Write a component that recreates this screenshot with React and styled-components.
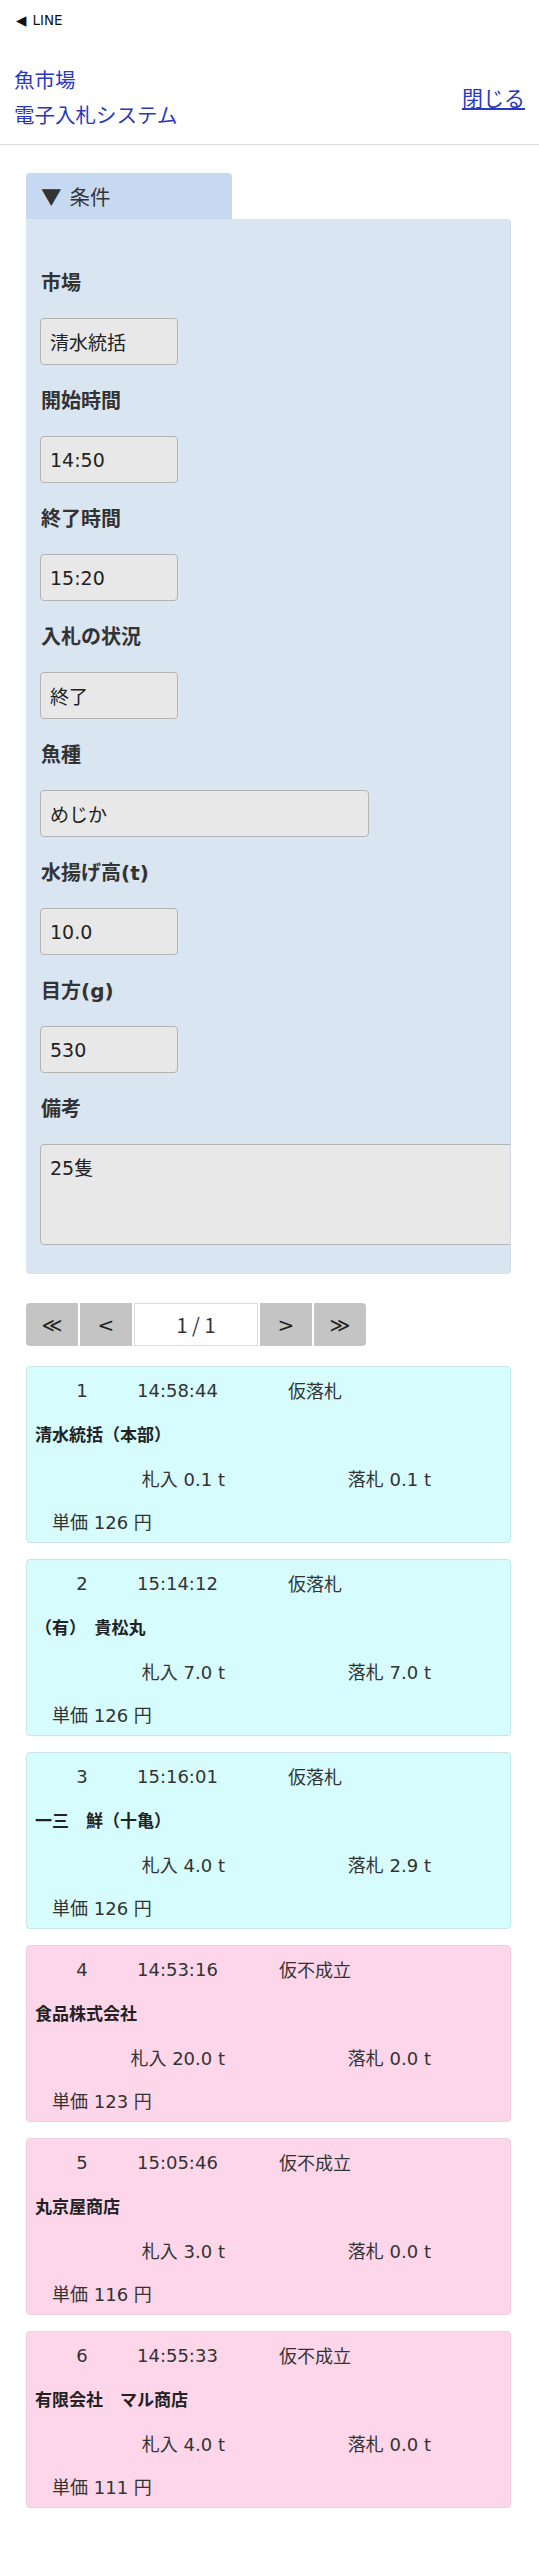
import styled, { createGlobalStyle } from "styled-components";

// 全体のベース
const GlobalStyle = createGlobalStyle`
  body {
    margin: 0;
    background: #ffffff;
    font-family: "DejaVu Sans", "Noto Sans CJK JP", sans-serif;
    color: #333333;
  }
`;

const conditions = [
  { label: "市場", value: "清水統括" },
  { label: "開始時間", value: "14:50" },
  { label: "終了時間", value: "15:20" },
  { label: "入札の状況", value: "終了" },
  { label: "魚種", value: "めじか", wide: true },
  { label: "水揚げ高(t)", value: "10.0" },
  { label: "目方(g)", value: "530" },
];

const bids = [
  { no: 1, time: "14:58:44", status: "仮落札", name: "清水統括（本部）", bid: "0.1", won: "0.1", price: 126, ok: true },
  { no: 2, time: "15:14:12", status: "仮落札", name: "（有）　貴松丸", bid: "7.0", won: "7.0", price: 126, ok: true },
  { no: 3, time: "15:16:01", status: "仮落札", name: "一三　鮮（十亀）", bid: "4.0", won: "2.9", price: 126, ok: true },
  { no: 4, time: "14:53:16", status: "仮不成立", name: "食品株式会社", bid: "20.0", won: "0.0", price: 123, ok: false },
  { no: 5, time: "15:05:46", status: "仮不成立", name: "丸京屋商店", bid: "3.0", won: "0.0", price: 116, ok: false },
  { no: 6, time: "14:55:33", status: "仮不成立", name: "有限会社　マル商店", bid: "4.0", won: "0.0", price: 111, ok: false },
];

// ヘッダー
const StatusBar = styled.div`
  height: 40px;
  display: flex;
  align-items: center;
  padding-left: 16px;
  font-size: 13.5px;
  color: #111;
  gap: 6px;
`;

const Header = styled.header`
  display: flex;
  align-items: center;
  justify-content: space-between;
  padding: 22px 14px 12px 14px;
  border-bottom: 1px solid #dddddd;
`;

const AppTitle = styled.div`
  font-family: "Noto Sans CJK JP", sans-serif;
  font-size: 20.5px;
  line-height: 35px;
  color: #2a38c0;
`;

const CloseLink = styled.a`
  font-family: "Noto Sans CJK JP", sans-serif;
  font-size: 21px;
  color: #2a38c0;
  text-decoration: underline;
  cursor: pointer;
`;

const Main = styled.main`
  padding: 28px 28px 60px 26px;
`;

// 条件パネル
const Tab = styled.div`
  width: 206px;
  height: 46px;
  box-sizing: border-box;
  display: flex;
  align-items: center;
  gap: 8px;
  padding-left: 15px;
  background: #c6d9f0;
  border-radius: 4px 4px 0 0;
  font-family: "Noto Sans CJK JP", sans-serif;
  font-size: 20.5px;
  color: #333;
`;

const Panel = styled.section`
  background: #dae5f2;
  border-right: 1px solid #d2dbe6;
  border-radius: 0 4px 4px 4px;
  padding: 49px 0 29px 15px;
  overflow: hidden;
  display: flex;
  flex-direction: column;
  align-items: flex-start;
`;

const FieldLabel = styled.div`
  font-size: 20px;
  font-weight: bold;
  line-height: 30px;
  color: #333;
  margin-bottom: 20px;
`;

const ValueBox = styled.input`
  width: ${(p) => (p.$wide ? "329px" : "138px")};
  height: 47px;
  box-sizing: border-box;
  margin: 0 0 21px -1px;
  padding: 0 9px;
  background: #e8e8e8;
  border: 1px solid #b3b3b3;
  border-radius: 4px;
  font-family: "DejaVu Sans", "Noto Sans CJK JP", sans-serif;
  font-size: 19px;
  color: #222;
  outline: none;
`;

const NoteBox = styled.textarea`
  width: 500px;
  height: 101px;
  box-sizing: border-box;
  margin-left: -1px;
  padding: 10px 9px;
  background: #e8e8e8;
  border: 1px solid #b3b3b3;
  border-radius: 4px;
  font-family: "DejaVu Sans", "Noto Sans CJK JP", sans-serif;
  font-size: 19px;
  line-height: 26px;
  color: #222;
  resize: none;
  outline: none;
`;

// ページャー
const Pager = styled.div`
  display: flex;
  gap: 2px;
  margin: 29px 0 20px 0;
  height: 43px;
`;

const PageBtn = styled.button`
  width: 52px;
  height: 43px;
  border: none;
  background: #c4c4c4;
  font-family: "DejaVu Sans", sans-serif;
  font-size: 20px;
  color: #222;
  padding: 0;
  border-radius: ${(p) => (p.$first ? "4px 0 0 4px" : p.$last ? "0 4px 4px 0" : "0")};
`;

const PageNow = styled.div`
  width: 124px;
  box-sizing: border-box;
  border: 1px solid #dddddd;
  display: flex;
  align-items: center;
  justify-content: center;
  font-family: "Noto Sans CJK JP", sans-serif;
  font-size: 20px;
  color: #333;
`;

// 入札カード
const BidList = styled.div`
  display: flex;
  flex-direction: column;
  gap: 16px;
`;

const BidCard = styled.div`
  height: 177px;
  box-sizing: border-box;
  padding-top: 3px;
  border-radius: 4px;
  background: ${(p) => (p.$ok ? "#d6fcfd" : "#fdd6ea")};
  border: 1px solid ${(p) => (p.$ok ? "#c8e6e9" : "#f1cde0")};
  display: grid;
  grid-template-rows: 40px 46px 44px 42px;
  font-size: 18px;
  color: #333;
`;

const HeadRow = styled.div`
  display: grid;
  grid-template-columns: 110px 124px 108px;
  align-items: center;
`;

const Cell = styled.span`
  text-align: ${(p) => p.$align || "left"};
`;

const NameRow = styled.div`
  display: flex;
  align-items: center;
  padding-left: 8px;
  font-family: "Noto Sans CJK JP", sans-serif;
  font-size: 17px;
  font-weight: bold;
  color: #222;
`;

const AmountRow = styled.div`
  display: grid;
  grid-template-columns: 198px 206px;
  align-items: center;
  justify-items: end;
`;

const PriceRow = styled.div`
  display: flex;
  align-items: center;
  padding-left: 25px;
`;

export default function App() {
  return (
    <>
      <GlobalStyle />
      <StatusBar>
        <span>◀</span>
        <span>LINE</span>
      </StatusBar>
      <Header>
        <AppTitle>
          魚市場
          <br />
          電子入札システム
        </AppTitle>
        <CloseLink>閉じる</CloseLink>
      </Header>

      <Main>
        <Tab>
          <span>▼</span>
          <span>条件</span>
        </Tab>
        <Panel>
          {conditions.map((c) => (
            <div key={c.label}>
              <FieldLabel>{c.label}</FieldLabel>
              <ValueBox readOnly value={c.value} $wide={c.wide} />
            </div>
          ))}
          <FieldLabel>備考</FieldLabel>
          <NoteBox readOnly value="25隻" />
        </Panel>

        <Pager>
          <PageBtn $first>≪</PageBtn>
          <PageBtn>&lt;</PageBtn>
          <PageNow>1 / 1</PageNow>
          <PageBtn>&gt;</PageBtn>
          <PageBtn $last>≫</PageBtn>
        </Pager>

        <BidList>
          {bids.map((b) => (
            <BidCard key={b.no} $ok={b.ok}>
              <HeadRow>
                <Cell $align="center">{b.no}</Cell>
                <Cell>{b.time}</Cell>
                <Cell $align="center">{b.status}</Cell>
              </HeadRow>
              <NameRow>{b.name}</NameRow>
              <AmountRow>
                <span>札入 {b.bid} t</span>
                <span>落札 {b.won} t</span>
              </AmountRow>
              <PriceRow>単価 {b.price} 円</PriceRow>
            </BidCard>
          ))}
        </BidList>
      </Main>
    </>
  );
}
